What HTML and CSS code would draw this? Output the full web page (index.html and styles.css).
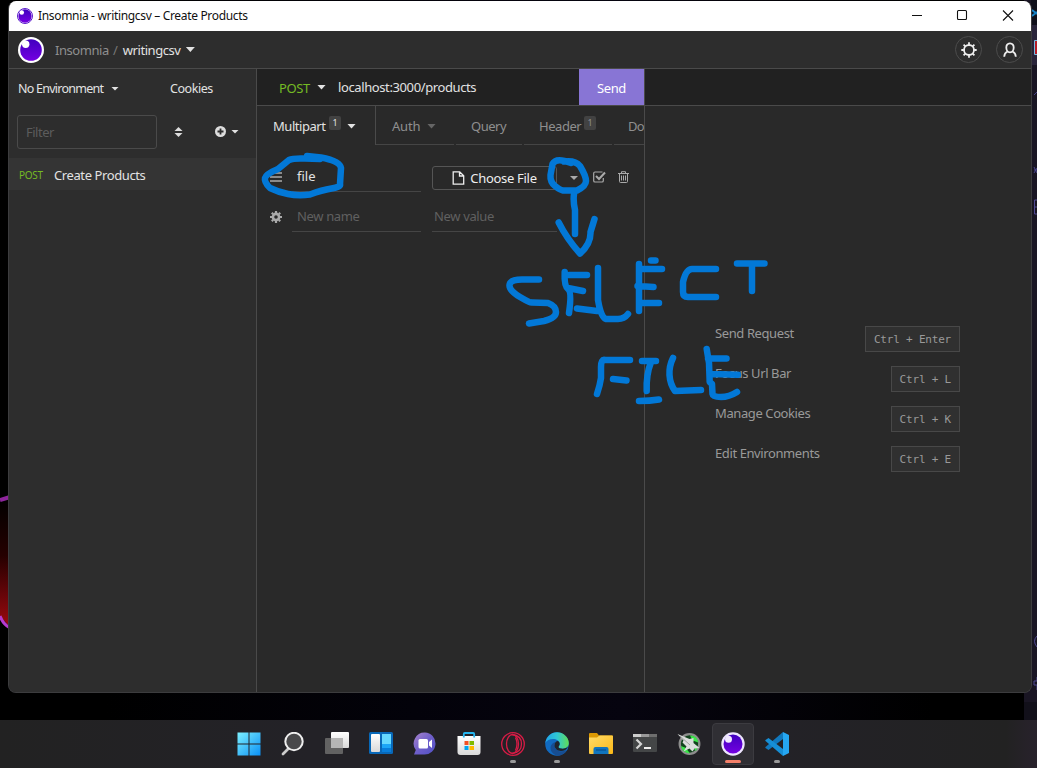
FILE: index.html
```html
<!DOCTYPE html>
<html lang="en">
<head>
<meta charset="utf-8">
<title>Insomnia</title>
<link rel="stylesheet" href="styles.css">
</head>
<body>
<svg width="0" height="0" class="defs">
  <defs>
    <linearGradient id="orb" x1="0" y1="0" x2="0" y2="1"><stop offset="0" stop-color="#4000bf"/><stop offset="1" stop-color="#7400e1"/></linearGradient>
    <linearGradient id="win" x1="0" y1="0" x2="1" y2="1"><stop offset="0" stop-color="#7cf0ff"/><stop offset="1" stop-color="#0a90f5"/></linearGradient>
    <linearGradient id="chat" x1="0" y1="0" x2="1" y2="1"><stop offset="0" stop-color="#a884cc"/><stop offset=".5" stop-color="#6f5fca"/><stop offset="1" stop-color="#4f50c4"/></linearGradient>
    <linearGradient id="edge" x1="0" y1="0" x2="1" y2="0"><stop offset="0" stop-color="#22a5e8"/><stop offset=".5" stop-color="#2fc7d4"/><stop offset="1" stop-color="#61dc54"/></linearGradient>
    <linearGradient id="folder" x1="0" y1="0" x2="1" y2="1"><stop offset="0" stop-color="#ffdc6a"/><stop offset="1" stop-color="#fbb816"/></linearGradient>
    <linearGradient id="white" x1="0" y1="0" x2="0" y2="1"><stop offset="0" stop-color="#fff"/><stop offset="1" stop-color="#d9d9d9"/></linearGradient>
    <symbol id="insomnia" viewBox="0 0 26 26">
      <circle cx="13" cy="13" r="13" fill="#fff"/><circle cx="13" cy="13" r="10.8" fill="url(#orb)"/><circle cx="7.7" cy="7.3" r="3.7" fill="#fff"/>
    </symbol>
  </defs>
</svg>
<div class="desktop">
  <svg class="wallpaper" viewBox="0 0 1037 768">
    <defs><linearGradient id="ember" x1="0" y1="0" x2="0" y2="1"><stop offset="0" stop-color="#000"/><stop offset=".45" stop-color="#250000"/><stop offset="1" stop-color="#9d0910"/></linearGradient></defs>
    <path d="M0 500L10 497V627L0 616Z" fill="url(#ember)"/>
    <path d="M0 500L10 497" stroke="#8d259b" stroke-width="4"/>
    <path d="M0 616Q3 624 10 628" stroke="#b53bd0" stroke-width="3" fill="none"/>
    <rect x="1024" width="13" height="768" fill="#191523"/>
    <rect x="1031" width="6" height="25" fill="#10101a"/>
    <rect x="1031" y="25" width="6" height="40" fill="#29243a"/>
    <rect x="1024" y="702" width="13" height="18" fill="#12101a"/>
    <path d="M1032 10l5 4M1032 16l5-4" stroke="#1683c6" stroke-width="2"/>
    <path d="M1037 40.500h-2.500v14h2.500" fill="#b51d27" stroke="#77bde3"/>
    <path d="M1034 95l3-3M1034 167l3 6M1034 173l3-5M1034 170h3" stroke="#48448a"/>
    <path d="M1037 200h-2.500v14h2.500M1035 207h2M1037 636q-5 5 0 11M1037 677v4h-3v4h3v5" fill="none" stroke="#514a91"/>
  </svg>

  <main class="window">
    <header class="titlebar">
      <svg class="title-logo"><use href="#insomnia"/><circle cx="8" cy="8" r="7.500" fill="none" stroke="#5a18cc"/></svg>
      <span class="title-text">Insomnia - writingcsv – Create Products</span>
      <svg class="window-buttons" viewBox="0 0 110 30" fill="none" stroke="#111" stroke-width="1.100"><path d="M3 14.500h10"/><rect x="48.500" y="9.500" width="9" height="9" rx="1"/><path d="M94 9.500l10 10M104 9.500l-10 10"/></svg>
    </header>
    <nav class="appbar">
      <svg class="app-logo"><use href="#insomnia"/></svg>
      <span class="crumb-home">Insomnia</span><span class="slash">/</span><span class="crumb-name">writingcsv</span><i class="caret"></i>
      <div class="app-actions">
        <span class="round"><svg width="18" height="18" viewBox="0 0 18 18" fill="none" stroke="#eee" stroke-width="1.800"><circle cx="9" cy="9" r="5"/><path d="M9 1.300v2.500M9 14.200v2.500M1.300 9h2.500M14.200 9h2.500M3.600 3.600l1.700 1.700M12.700 12.700l1.700 1.700M3.600 14.400l1.700-1.700M12.700 5.300l1.700-1.700"/></svg></span>
        <span class="round"><svg width="18" height="18" viewBox="0 0 18 18" fill="none" stroke="#eee" stroke-width="1.800"><path d="M9 2.300C6.400 2.300 5.300 4.300 5.300 6.500S6.500 11.300 9 11.300s3.700-2.600 3.700-4.800S11.600 2.300 9 2.300ZM6.500 10.500C4 11.500 3.300 13 3.200 15.800M11.500 10.500c2.500 1 3.200 2.500 3.300 5.300"/></svg></span>
      </div>
    </nav>
    <div class="workspace">
      <aside class="sidebar">
        <div class="side-top"><span class="environment">No Environment</span><i class="caret small"></i><span class="cookies">Cookies</span></div>
        <div class="side-filter">
          <div class="filter"><span>Filter</span></div>
          <svg class="sort" width="9" height="10" viewBox="0 0 9 10"><path d="M4.500 0L8.500 4H.5ZM.5 6h8L4.500 10Z" fill="#ddd"/></svg>
          <svg class="plus" width="11" height="11" viewBox="0 0 11 11"><circle cx="5.500" cy="5.500" r="5.500" fill="#ddd"/><path d="M5.500 2.500v6M2.500 5.500h6" stroke="#2d2d2d" stroke-width="1.800"/></svg>
          <i class="caret small"></i>
        </div>
        <div class="request-row"><span class="method-tag">POST</span><span class="request-name">Create Products</span></div>
      </aside>
      <section class="request">
        <div class="urlbar"><span class="method">POST</span><i class="caret"></i><span class="url">localhost:3000/products</span><button class="send">Send</button></div>
        <div class="tabs">
          <div class="tab active"><span class="t-multipart">Multipart</span><sup>1</sup><i class="caret"></i></div>
          <div class="tab auth"><span class="t-auth">Auth</span><i class="caret"></i></div>
          <div class="tab query"><span class="t-query">Query</span></div>
          <div class="tab headers"><span class="t-header">Header</span><sup>1</sup></div>
          <div class="tab docs"><span class="t-docs">Do</span></div>
        </div>
        <div class="form-row">
          <svg class="row-icon" width="12" height="12" viewBox="0 0 12 12"><path d="M0 2h12M0 6h12M0 10h12" stroke="#aaa" stroke-width="1.600"/></svg>
          <div class="field name"><span class="v-file">file</span></div>
          <div class="choose"><svg width="13" height="14" viewBox="0 0 13 14" fill="none" stroke="#eee" stroke-width="1.300"><path d="M1.200.8h6.500l4 4v8.400H1.200ZM7.500.8V5h4.200"/></svg><span class="t-choose">Choose File</span></div>
          <i class="caret dim drop"></i>
          <svg class="check" width="13" height="12" viewBox="0 0 13 12" fill="none" stroke="#aaa"><path d="M9.500 1H2Q.700 1 .700 2.300V9.700Q.700 11 2 11h7Q10.300 11 10.300 9.700V7" stroke-width="1.200"/><path d="M3 5l3 3 6-6.500" stroke-width="2"/></svg>
          <svg class="trash" width="11" height="12" viewBox="0 0 11 12" fill="none" stroke="#aaa"><path d="M0 2.500h11M3.500 2.500V.700h4v1.800M1.500 2.500v8q0 1 1 1h6q1 0 1-1v-8M3.500 4.500v5M5.500 4.500v5M7.500 4.500v5"/></svg>
        </div>
        <div class="form-row second">
          <svg class="row-icon" width="12" height="12" viewBox="0 0 12 12" fill="none" stroke="#aaa"><circle cx="6" cy="6" r="3.100" stroke-width="2.600"/><path d="M6 0v2M6 10v2M0 6h2M10 6h2M1.800 1.800l1.400 1.400M8.800 8.800l1.400 1.400M1.800 10.200l1.400-1.400M8.800 3.200l1.400-1.400" stroke-width="2.200"/></svg>
          <div class="field name"><span class="v-name">New name</span></div>
          <div class="field value"><span class="v-value">New value</span></div>
        </div>
      </section>
      <section class="response">
        <div class="response-head"></div>
        <div class="shortcuts">
          <div class="shortcut"><span class="s1">Send Request</span><kbd>Ctrl + Enter</kbd></div>
          <div class="shortcut"><span class="s2">Focus Url Bar</span><kbd>Ctrl + L</kbd></div>
          <div class="shortcut"><span class="s3">Manage Cookies</span><kbd>Ctrl + K</kbd></div>
          <div class="shortcut"><span class="s4">Edit Environments</span><kbd>Ctrl + E</kbd></div>
        </div>
      </section>
    </div>
  </main>

  <footer class="taskbar">
    <div class="task"><svg viewBox="0 0 24 24"><path d="M.5.500h11v11H.500ZM12.500.500h11v11h-11ZM.500 12.500h11v11H.500ZM12.500 12.500h11v11h-11Z" fill="url(#win)"/></svg></div>
    <div class="task"><svg viewBox="0 0 24 24"><path d="M7.500 16.500L2 22" stroke="#ccc" stroke-width="2.800" stroke-linecap="round"/><circle cx="13" cy="9.500" r="8.700" fill="#48484a" stroke="#eee" stroke-width="2"/></svg></div>
    <div class="task"><svg viewBox="0 0 24 24"><rect y="6" width="18" height="16" rx="1" fill="#626262"/><rect x="6" width="18" height="16" rx="1" fill="url(#white)"/><path d="M6 6h12v10H6Z" fill="#b5b5b5"/></svg></div>
    <div class="task"><svg viewBox="0 0 24 24"><rect width="24" height="22" rx="1.500" fill="#0868b8"/><rect x="2" y="2" width="9" height="18" rx="1" fill="url(#white)"/><path d="M13 2h9v10h-9Z" fill="#66d9ff"/><path d="M13 12h9v4h-9Z" fill="#1ca6f7"/><path d="M13 16h9v4h-9Z" fill="#087edb"/></svg></div>
    <div class="task"><svg viewBox="0 0 24 24"><path d="M12 .500a11 11 0 1 1-1 22H1L2.800 18A11 11 0 0 1 12 .500Z" fill="url(#chat)"/><rect x="5.500" y="7" width="9.500" height="9.500" rx="1.500" fill="#fff"/><path d="M16 10l3-2.500v8.500L16 13.500Z" fill="#fff"/></svg></div>
    <div class="task"><svg viewBox="0 0 24 24"><path d="M.500 4h23v16q0 3-3 3h-17q-3 0-3-3Z" fill="url(#white)"/><path d="M6.800 5.500V2Q6.800 1 7.800 1h8.400q1 0 1 1v3.500" fill="none" stroke="#25b6f0" stroke-width="1.800"/><path d="M7.500 9h4v4h-4Z" fill="#f25022"/><path d="M12.500 9h4.500v4h-4.500Z" fill="#7fba00"/><path d="M7.500 14h4v4h-4Z" fill="#00a4ef"/><path d="M12.500 14h4.500v4h-4.500Z" fill="#ffb900"/></svg></div>
    <div class="task open"><svg viewBox="0 0 24 24" fill="none" stroke="#d71c46" stroke-width="1.300"><circle cx="12" cy="12" r="11.300"/><ellipse cx="11.500" cy="12" rx="6" ry="9.500"/><path d="M11 2.500Q20.500 3.500 20.500 12T11 21.500M14.500 5.500q3 6.500 0 13"/></svg></div>
    <div class="task open"><svg viewBox="0 0 24 24"><circle cx="12" cy="12" r="11.800" fill="#116ac0"/><path d="M.300 11C1.500 4.500 6 .200 12 .200S23.800 5 23.800 11c0 4-3 5.700-6 5.700-2.500 0-4.300-.7-4.300-1.700 0-.8 1.200-1.300 1.200-3.200C14.700 9 11.500 7 8 7 4.500 7 1.800 8.500.300 11Z" fill="url(#edge)"/><path d="M22 18Q14 21.500 10 16q-1.500-3 .5-6-4 1-5 5-.500 6 6.500 8.800 6.500 0 10-5.800Z" fill="#174d91"/><path d="M14.700 11.800c0 1.900-1.200 2.400-1.200 3.200 0 1 1.800 1.700 4.300 1.700 2 0 4-.8 5.200-2.200-1 3-4 4.500-7 4.500-4 0-6.500-3-6.500-5.500S11 9 13 9q1.700 1 1.700 2.800Z" fill="#20242a"/></svg></div>
    <div class="task"><svg viewBox="0 0 24 24"><path d="M0 2q0-1 1-1h7l2 2.500h13q1 0 1 1V8H0Z" fill="#dc9903"/><path d="M0 5.500h8l2.500-2H23q1 0 1 1V21q0 1-1 1H1q-1 0-1-1Z" fill="url(#folder)"/><path d="M4.500 22v-5q0-2 2-2h11q2 0 2 2v5Z" fill="#1175be"/><path d="M7 18h10" stroke="#07589b" stroke-width="1.500"/></svg></div>
    <div class="task"><svg viewBox="0 0 24 24"><rect y="2" width="24" height="18" rx="1" fill="#444647"/><path d="M0 2h8v3H0Z" fill="#ccc"/><path d="M8 2h8v3H8Z" fill="#999"/><path d="M16 2h8v3h-8Z" fill="#6e6e6e"/><path d="M3.500 7.500l4.500 4.500-4.500 4.500" stroke="#d5d5d5" stroke-width="2.200" fill="none"/><path d="M11 16h7" stroke="#eee" stroke-width="2"/></svg></div>
    <div class="task"><svg viewBox="0 0 24 24"><circle cx="12.500" cy="12" r="9.800" fill="#12441d" stroke="#8d8d8d" stroke-width="2.300"/><path d="M13 3.500q7 0 8.500 7l-6-2ZM4 14q1 7 9 7.500L9 16ZM17 17l4-3-2 5Z" fill="#3ae649"/><path d="M.500 2l12 5 4-1v5l6 5-5 .5-2 3-3-3-6 3 3-5-4-4 1-2Z" fill="#dcdedd"/><path d="M3 4l10 9" stroke="#8c8f8d" stroke-width=".8"/></svg></div>
    <div class="task current"><svg viewBox="0 0 24 24"><circle cx="12" cy="12" r="11.700" fill="#eee6ff"/><circle cx="12" cy="12" r="9.500" fill="url(#orb)"/><circle cx="7.500" cy="7.300" r="3.500" fill="#f1e9ff"/></svg></div>
    <div class="task open"><svg viewBox="0 0 24 24"><path d="M18 0v7L3.500 18 .5 16Q0 15.500.500 15Z" fill="#1178bd"/><path d="M18 24v-7L3.500 6 .500 8Q0 8.500.500 9Z" fill="#168ed5"/><path d="M18 0l6 3v18l-6 3Z" fill="#25a7f2"/></svg></div>
  </footer>

  <svg class="ink" viewBox="0 0 1037 768">
    <path d="M320 159L305 158.500Q293 158 289 160L278 169Q266 174 265 178T270 188Q278 192 288 194T310 194.500Q322 190 331.500 188.500T340 184L341 168Q340 161 321 157.500L307 156"/>
    <path d="M571 163Q556 157 552.500 164L550.500 175Q550 182 555 186T563 190.500H577Q586 186 586 181T580 166Q575 160 564 161.500"/>
    <path d="M574 194Q573 201 575 210V234M558.700 222.500Q567 239 580 253.500Q591 244 590.500 232L594.500 219"/>
    <path d="M539 279.500H522Q510 279.500 509.500 285T520 297 532 302.500L548 303Q556 306 556 312T544 321L529 323.500"/>
    <path d="M564.700 272Q564 286 568 289T569 313M569 275H587M568 288L583 291M577 308.500L597 311M598 268V300Q601 318 606 319H618Q624 319 628 314"/>
    <path d="M639 264V311M640 269H662M637.500 286L653.500 287M639 303H659M651 260.500H655.500"/>
    <path d="M716 269H692Q686 269 683 282V292Q683 297 688 297H716M737 263.500H764.500M752 264V291"/>
    <path d="M630 360H605Q601 359 601 367V378Q600 385 597 394M613 379L626.500 380.500M642 361H656M651 362Q646 375 646.700 391M639 401Q650 401 659 399.500M673 358Q669 366 669.500 375T675 391L701 390"/>
    <path d="M706.700 349L709 363 709.700 382 712 384 712.500 394Q713 397 721 397T737 392M708 358.500H726.500M711 374L738 374.700"/>
  </svg>
</div>
</body>
</html>
```
FILE: styles.css
```css
* { box-sizing: border-box; }
body { margin: 0; background: #000; }
.defs { position: absolute; }
.desktop { position: relative; width: 1037px; height: 768px; overflow: hidden; display: flex; flex-direction: column; background: linear-gradient(90deg, #000 10%, #03020a 40%, #06040f 60%, #000 90%); font: 13px/18px "Noto Sans", "Open Sans", sans-serif; color: #e2e2e2; }
.wallpaper, .ink { position: absolute; inset: 0; width: 1037px; height: 768px; }
.ink { fill: none; stroke: #0278d7; stroke-width: 6.5; stroke-linecap: round; stroke-linejoin: round; pointer-events: none; }
.desktop span { white-space: nowrap; }
.window { position: relative; flex: none; width: 1024px; height: 692px; margin: 1px 0 0 8px; border: 1px solid #3c3c3e; border-top: 0; border-radius: 8px; overflow: hidden; background: #292929; display: flex; flex-direction: column; }
.titlebar { height: 30px; flex: none; display: flex; align-items: center; background: #fff; color: #111; padding-left: 8px; font-size: 12px; }
.title-logo { width: 16px; height: 16px; margin-right: 5px; }
.title-text { letter-spacing: -.33px; }
.window-buttons { width: 110px; height: 30px; margin: 0 12px 0 auto; }
.appbar { height: 38px; flex: none; display: flex; align-items: center; padding-left: 9px; border-bottom: 1px solid #4a4a4a; background: #2d2d2d; }
.app-logo { width: 26px; height: 26px; margin-right: 11px; }
.crumb-home { width: 52px; color: #8f8f8f; letter-spacing: -.45px; }
.slash { margin: 0 5px 0 6px; color: #777; }
.crumb-name { width: 58px; letter-spacing: -.45px; }
.app-actions { display: flex; gap: 14px; margin: 0 8px 0 auto; }
.round { width: 27px; height: 27px; border: 1px solid #4c4c4c; border-radius: 50%; display: grid; place-items: center; }
.caret { width: 9px; height: 5px; flex: none; margin-left: 6px; background: #e2e2e2; clip-path: polygon(0 0, 100% 0, 50% 100%); }
.crumb-name + .caret { margin-left: 5px; }
.caret.small { width: 8px; height: 4px; }
.workspace { flex: 1; display: flex; min-height: 0; }
.sidebar { width: 248px; flex: none; background: #2d2d2d; border-right: 1px solid #4a4a4a; }
.side-top { height: 40px; display: flex; align-items: center; padding: 0 0 1px 9px; font-size: 12.5px; }
.environment { width: 87px; letter-spacing: -.75px; }
.cookies { margin-left: 51px; letter-spacing: -.45px; }
.side-filter { height: 49px; display: flex; align-items: center; padding: 0 0 4px 8px; }
.side-filter .caret { margin-left: 5px; }
.filter { width: 140px; height: 34px; border: 1px solid #4a4a4a; border-radius: 3px; display: flex; align-items: center; padding-left: 8px; color: #5c5c5c; }
.filter span { letter-spacing: -.5px; }
.sort { margin-left: 17px; }
.plus { margin-left: 32px; }
.request-row { height: 32px; display: flex; align-items: center; padding: 2px 0 0 10px; background: #343434; }
.method-tag { width: 35px; font-size: 10px; color: #75ba24; letter-spacing: -.3px; }
.request-name { letter-spacing: -.4px; }
.request { width: 388px; flex: none; border-right: 1px solid #4a4a4a; overflow: hidden; }
.urlbar { height: 37px; display: flex; align-items: center; padding-left: 22px; background: #212121; border-bottom: 1px solid #4a4a4a; }
.method { width: 31px; margin-top: 2px; color: #75ba24; letter-spacing: -.4px; }
.urlbar .caret { margin-left: 7px; }
.url { margin-left: 12px; letter-spacing: -.39px; }
.send { width: 65px; height: 36px; margin-left: auto; padding: 2px 0 0; border: 0; background: #8875d5; color: #fff; font: 13px "Noto Sans", sans-serif; letter-spacing: -.4px; }
.tabs { height: 39px; display: flex; overflow: hidden; }
.tab { flex: none; display: flex; align-items: center; color: #8f8f8f; border-bottom: 1px solid #454545; padding-top: 2px; }
.tab sup { width: 12px; height: 14px; margin: -6px 0 0 3px; border-radius: 2px; background: #424242; font-size: 9px; line-height: 14px; text-align: center; }
.tab.active { width: 119px; padding: 1px 0 0 16px; color: #e2e2e2; border-right: 1px solid #4a4a4a; border-bottom: 0; }
.t-multipart { width: 53px; letter-spacing: -.45px; }
.tab.auth { width: 78px; padding-left: 16px; margin-right: 2px; }
.auth .caret { background: #656565; }
.t-auth { letter-spacing: -.2px; width: 29px; }
.tab.query { width: 66px; padding-left: 15px; margin-right: 2px; }
.t-query { letter-spacing: -.5px; }
.tab.headers { width: 88px; padding-left: 15px; margin-right: 2px; }
.t-header { width: 42px; letter-spacing: -.45px; }
.tab.docs { width: 31px; padding-left: 14px; }
.t-docs { letter-spacing: -.8px; }
.form-row { height: 47px; display: flex; align-items: flex-end; padding-left: 13px; }
.form-row > * { flex: none; }
.form-row.second { height: 40px; }
.row-icon { margin: 0 10px 9px 0; }
.field { height: 31px; padding: 6px 0 0 5px; border-bottom: 1px solid #454545; color: #606060; }
.field.name { width: 129px; margin-right: 11px; }
.field.value { width: 125px; padding-left: 2px; }
.v-file { color: #e2e2e2; }
.v-name, .v-value { letter-spacing: -.35px; }
.choose { width: 125px; height: 24px; margin-bottom: 2px; border: 1px solid #555; border-radius: 3px; display: flex; align-items: center; justify-content: center; gap: 5px; color: #eee; }
.t-choose { letter-spacing: -.3px; }
.caret.drop { width: 8px; height: 4px; margin: 0 0 12px 13px; background: #aaa; }
.check { margin: 0 0 9px 15px; }
.trash { margin: 0 0 9px 12px; }
.response { flex: 1; background: #292929; }
.response-head { height: 37px; background: #212121; border-bottom: 1px solid #4a4a4a; }
.shortcuts { padding: 218px 71px 0 70px; }
.shortcut { height: 40px; display: flex; justify-content: space-between; align-items: flex-start; color: #999; letter-spacing: -.4px; }
.shortcut kbd { height: 26px; margin-top: 2px; padding: 1px 8px 0; border: 1px solid #484848; background: #303030; color: #999; font: 11px/24px "DejaVu Sans Mono", monospace; letter-spacing: -.2px; white-space: pre; }
.taskbar { position: relative; height: 48px; flex: none; margin-top: auto; display: flex; justify-content: flex-start; padding-left: 227px; background: linear-gradient(90deg, #222, #232227 30%, #232227 75%, #222 97%, #28222c); }
.task { position: relative; width: 44px; height: 48px; display: grid; place-items: center; }
.task svg { width: 24px; height: 24px; }
.task.open::after, .task.current::after { content: ""; position: absolute; bottom: 5px; width: 6px; height: 3px; border-radius: 2px; background: #999; }
.task.current::before { content: ""; position: absolute; width: 40px; height: 40px; border-radius: 4px; border: 1px solid #3c3b40; background: #302f34; }
.task.current svg { position: relative; }
.task.current::after { width: 16px; background: #f4806a; }
```
